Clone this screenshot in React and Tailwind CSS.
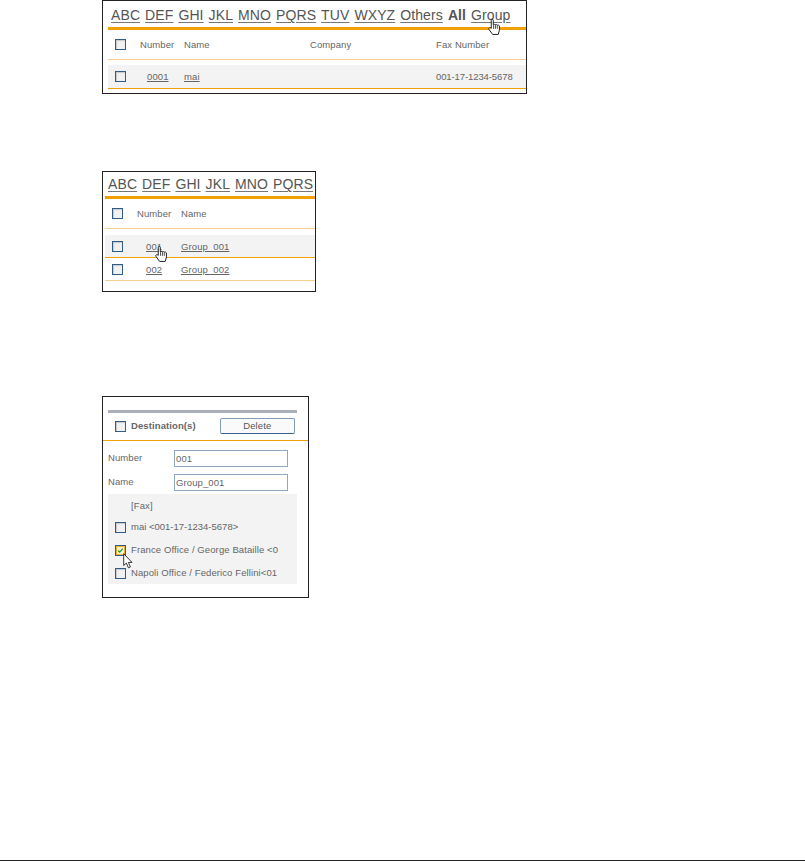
function Checkbox({ checked }) {
	return (
		<span className="relative block w-[11px] h-[11px] shrink-0 border border-[#2f5d85] bg-[#f1f1f1] shadow-[inset_1px_1px_1px_#c9c9c9]">
			{checked && (
				<span className="absolute inset-0 border border-[#f0b030] bg-[#fbf3d0]">
					<svg viewBox="0 0 9 9" className="absolute inset-0 w-full h-full">
						<path d="M1.5 4.5 L3.5 6.5 L7.5 2" fill="none" stroke="#1f9a2f" strokeWidth="1.6" />
					</svg>
				</span>
			)}
		</span>
	)
}

function HandCursor({ className }) {
	return (
		<svg viewBox="0 0 14 18" className={className}>
			<path
				d="M3.5 10 V2 Q3.5 .8 4.6 .8 Q5.7 .8 5.7 2 V6.5 Q7 5.8 7.8 6.5 Q9.2 6 10 7 Q11.6 6.6 12.3 7.8 V12.5 L11 17 H5 L1.2 11.8 Q.4 10.4 1.6 9.8 Q2.6 9.5 3.5 10.5 Z"
				fill="#fff"
				stroke="#111"
				strokeWidth="1"
			/>
			<path d="M6 7 V11 M8 7 V11 M10 7.5 V11" fill="none" stroke="#111" strokeWidth=".8" />
		</svg>
	)
}

function ArrowCursor({ className }) {
	return (
		<svg viewBox="0 0 11 16" className={className}>
			<path
				d="M.7 .7 V12.5 L3.4 10 L5.4 14.8 L7.4 14 L5.4 9.4 H9 Z"
				fill="#fff"
				stroke="#222"
				strokeWidth=".9"
			/>
		</svg>
	)
}

function Tabs({ items, className }) {
	return (
		<div className={`flex items-end gap-[5px] pl-[3px] pb-[4px] text-[14px] leading-[16px] text-[#555] whitespace-nowrap ${className}`}>
			{items.map(item => (
				<span key={item} className={item === 'All' ? 'font-bold' : 'underline underline-offset-2 decoration-[#777]'}>
					{item}
				</span>
			))}
		</div>
	)
}

function App() {
	return (
		<div className="relative h-[861px] flex flex-col bg-white text-[9.5px] tracking-[0.1px] text-[#666] font-['Liberation_Sans',Arial,sans-serif]">
			{/* Fax list */}
			<div className="relative w-[425px] h-[94px] ml-[102px] border border-[#222] pl-[5px] overflow-hidden">
				<Tabs className="h-[26px]" items={['ABC', 'DEF', 'GHI', 'JKL', 'MNO', 'PQRS', 'TUV', 'WXYZ', 'Others', 'All', 'Group']} />
				<div className="h-[3px] bg-[#f0a000]" />
				<div className="grid grid-cols-[32px_44px_126px_126px_1fr] items-center h-[30px] border-b border-[#f5cf8e]">
					<span className="pl-[7px]"><Checkbox /></span>
					<span className="pt-[2px]">Number</span>
					<span className="pt-[2px]">Name</span>
					<span className="pt-[2px]">Company</span>
					<span className="pt-[2px]">Fax Number</span>
				</div>
				<div className="grid grid-cols-[32px_44px_126px_126px_1fr] items-center h-[24px] mt-[5px] bg-[#f3f3f3] border-b border-[#f0a000]">
					<span className="pl-[7px]"><Checkbox /></span>
					<span className="pl-[7px] pt-[2px] underline">0001</span>
					<span className="pt-[2px] underline">mai</span>
					<span />
					<span className="pt-[2px] tracking-[-0.1px]">001-17-1234-5678</span>
				</div>
				<HandCursor className="absolute left-[385px] top-[17px] w-[13px] h-[18px]" />
			</div>

			{/* Group list */}
			<div className="relative w-[214px] h-[121px] mt-[77px] ml-[102px] border border-[#222] pl-[2px] overflow-hidden">
				<Tabs className="h-[24px]" items={['ABC', 'DEF', 'GHI', 'JKL', 'MNO', 'PQRS']} />
				<div className="h-[3px] bg-[#f0a000]" />
				<div className="grid grid-cols-[32px_44px_1fr] items-center h-[30px] border-b border-[#f5cf8e]">
					<span className="pl-[7px]"><Checkbox /></span>
					<span className="pt-[2px]">Number</span>
					<span className="pt-[2px]">Name</span>
				</div>
				<div className="grid grid-cols-[32px_44px_1fr] items-center h-[23px] mt-[6px] bg-[#f3f3f3] border-b border-[#f0a000]">
					<span className="pl-[7px]"><Checkbox /></span>
					<span className="pl-[9px] pt-[2px] underline">001</span>
					<span className="pt-[2px] underline">Group_001</span>
				</div>
				<div className="grid grid-cols-[32px_44px_1fr] items-center h-[23px] border-b border-[#f5cf8e]">
					<span className="pl-[7px]"><Checkbox /></span>
					<span className="pl-[9px] pt-[2px] underline">002</span>
					<span className="pt-[2px] underline">Group_002</span>
				</div>
				<HandCursor className="absolute left-[52px] top-[73px] w-[13px] h-[18px]" />
			</div>

			{/* Group edit */}
			<div className="relative w-[207px] h-[202px] mt-[104px] ml-[102px] border border-[#222] overflow-hidden">
				<div className="h-[3px] mt-[13px] ml-[5px] bg-[#a9b0b8] w-[189px]" />
				<div className="flex items-center h-[28px] border-b border-[#f0a000] pl-[12px]">
					<Checkbox />
					<span className="ml-[5px] font-bold">Destination(s)</span>
					<span className="ml-[24px] w-[75px] h-[16px] flex items-center justify-center rounded-[2px] border border-[#7f9db9] border-b-[#37618a] bg-[#fafafa] text-[#555] mb-px">Delete</span>
				</div>
				<div className="flex flex-col gap-[7px] mt-[9px] pl-[5px]">
					<div className="flex items-center h-[17px]">
						<span className="w-[66px]">Number</span>
						<input readOnly value="001" className="w-[114px] h-[17px] border border-[#8fa9c0] px-px text-[9.5px] text-[#666] outline-none" />
					</div>
					<div className="flex items-center h-[17px]">
						<span className="w-[66px]">Name</span>
						<input readOnly value="Group_001" className="w-[114px] h-[17px] border border-[#8fa9c0] px-px text-[9.5px] text-[#666] outline-none" />
					</div>
				</div>
				<div className="w-[189px] h-[90px] mt-[3px] ml-[5px] bg-[#f3f3f3] pl-[7px] whitespace-nowrap">
					<div className="flex items-center h-[22px] pl-[16px] pt-[2px]">[Fax]</div>
					<div className="flex items-center gap-[5px] h-[23px]">
						<Checkbox />
						<span className="tracking-normal">mai &lt;001-17-1234-5678&gt;</span>
					</div>
					<div className="flex items-center gap-[5px] h-[23px]">
						<Checkbox checked />
						<span>France Office / George Bataille &lt;0</span>
					</div>
					<div className="flex items-center gap-[5px] h-[23px]">
						<Checkbox />
						<span>Napoli Office / Federico Fellini&lt;01</span>
					</div>
				</div>
				<ArrowCursor className="absolute left-[20px] top-[156px] w-[11px] h-[16px]" />
			</div>

			<div className="mt-auto h-px bg-[#222]" />
		</div>
	)
}

export default App
